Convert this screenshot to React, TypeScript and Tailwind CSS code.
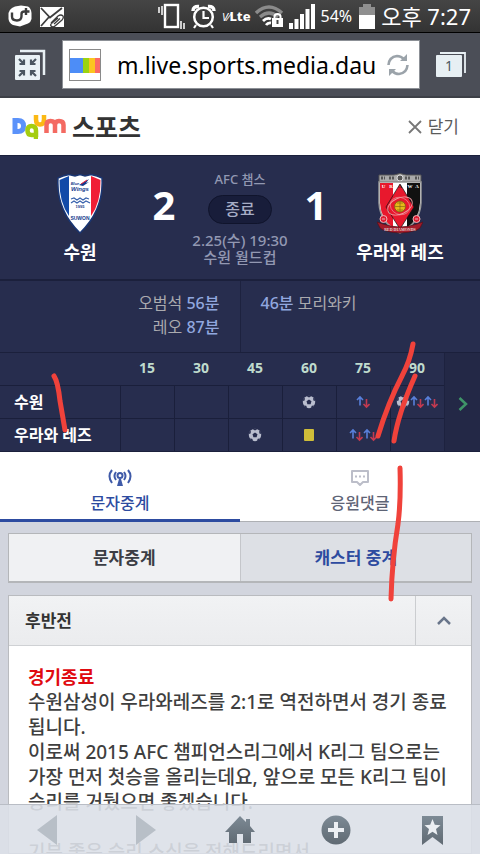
import type { ReactNode } from 'react'

const MINUTES = [15, 30, 45, 60, 75, 90]

type Mark = 'goal' | 'sub' | 'card'

const TIMELINE: { team: string; events: Mark[][] }[] = [
  { team: '수원', events: [[], [], [], ['goal'], ['sub'], ['goal', 'sub', 'sub']] },
  { team: '우라와 레즈', events: [[], [], ['goal'], ['card'], ['sub', 'sub'], []] },
]

function StatusBar() {
  return (
    <div className="flex h-[33px] shrink-0 items-center justify-between border-b border-black bg-linear-to-b from-[#454545] to-[#333333] pr-[9px] pl-2 text-white">
      <div className="flex items-center gap-2">
        <svg viewBox="0 0 24 22" className="h-[22px] w-6">
          <path d="M7 1.5L13 .5L20 1.5Q23 3 23.5 8V14Q23 17 20 18.5L12 21.5L5 20Q1 18 .5 14L.5 8Q1 5 4 3Z" fill="#fff" />
          <path d="M4 7.5V11.5Q4 15.500 9 15.500Q13.500 15.500 13.500 11V9Q13.500 6.500 16.500 6.500H21.500M18 3V10" fill="none" stroke="#3d3d3d" strokeWidth="2.4" />
        </svg>
        <svg viewBox="0 0 24 21" className="h-[21px] w-6">
          <path d="M0 1H24V21H0Z" fill="#fff" />
          <path d="M1 2L10 11.5L22 2M1 20L9 11" fill="none" stroke="#3d3d3d" strokeWidth="1.8" />
          <path d="M11 17L18 10Q21 8 23 10Q24 12 22 14L15 20Q13 22 11 20Q10 18.5 12 17L18 12M14 18L20 12.5" fill="none" stroke="#fff" strokeWidth="3.5" />
          <path d="M11 17L18 10Q21 8 23 10Q24 12 22 14L15 20Q13 22 11 20Q10 18.5 12 17L18 12M14 18L20 12.5" fill="none" stroke="#3d3d3d" strokeWidth="1.3" />
        </svg>
      </div>
      <div className="flex items-center">
        <svg viewBox="0 0 27 27" className="mr-[6px] h-[27px] w-[27px]" fill="none" stroke="#fff">
          <rect x="7" y="2" width="13" height="22" strokeWidth="2.4" />
          <path d="M1 4V10M4 3V12M23 18V26M26 20V26" strokeWidth="1.5" />
        </svg>
        <svg viewBox="0 0 25 25" className="mr-[6px] h-[25px] w-[25px]" fill="none" stroke="#fff">
          <circle cx="12.5" cy="13" r="9.3" strokeWidth="2.5" />
          <path d="M12.5 7V14H18M5 21L3 24M20 21L22 24" strokeWidth="2.2" />
          <path d="M2 7Q2 2 8 2.5M17 2.5Q23 2 23 7" strokeWidth="3.5" />
        </svg>
        <span className="mr-1 font-['Noto_Sans'] text-[13px] leading-4 font-extrabold">
          <span className="text-[11px] font-normal italic">V⁄</span>Lte
        </span>
        <svg viewBox="0 0 30 22" className="mr-1 h-[22px] w-[30px]" fill="none">
          <path d="M1 8Q14 -4 27 8" stroke="#8b8b8b" strokeWidth="3.5" />
          <path d="M5 12Q14 4 23 12" stroke="#8b8b8b" strokeWidth="3.2" />
          <path d="M8 16Q12 12 16 14M11 20Q13 17.5 16 18" stroke="#fff" strokeWidth="2.8" />
          <path d="M19.5 14V11.5Q19.5 9 22.5 9Q25.5 9 25.5 11.5V14" stroke="#fff" strokeWidth="2" />
          <rect x="17" y="13" width="11" height="9" fill="#fff" />
          <path d="M22.5 15V19" stroke="#444" strokeWidth="2" />
        </svg>
        <svg viewBox="0 0 26 25" className="mr-[6px] h-[25px] w-[26px]" fill="#fff">
          <path d="M0 19H4V25H0ZM5.5 15H9.5V25H5.5ZM11 10H15V25H11ZM16.5 5H20.5V25H16.5ZM22 0H26V25H22Z" />
        </svg>
        <span className="mr-[7px] font-['Noto_Sans'] text-base leading-5">54%</span>
        <svg viewBox="0 0 16 25" className="mr-[6px] h-[25px] w-4">
          <path d="M4 0H12V3H16V11H0V3H4Z" fill="#8f8f8f" />
          <path d="M0 11H16V25H0Z" fill="#fff" />
        </svg>
        <span className="text-[22px] leading-7 whitespace-nowrap">오후 7:27</span>
      </div>
    </div>
  )
}

function BrowserBar() {
  return (
    <div className="flex h-[65px] shrink-0 items-center border-b-2 border-[#3d4047] bg-[#4b4e57] px-3.5">
      <button aria-label="전체 화면" className="mr-4">
        <svg viewBox="0 0 32 32" className="h-8 w-8">
          <path d="M6 2H30V26" fill="none" stroke="#e8f0f4" strokeWidth="2.5" />
          <rect x="1" y="6" width="25" height="25" rx="1" fill="#eaf2f6" />
          <path d="M5 10L10 15M10 10.5V15H5.5M22 10L17 15M17 10.5V15H21.5M5 27L10 22M5.5 22H10V26.5M22 27L17 22M21.5 22H17V26.5" fill="none" stroke="#4b5661" strokeWidth="2.2" />
        </svg>
      </button>
      <div className="flex h-[49px] min-w-0 flex-1 items-center border border-[#8c9096] bg-white pr-2.5 pl-1.5">
        <svg viewBox="0 0 32 32" className="h-8 w-8 shrink-0">
          <rect x=".5" y=".5" width="31" height="31" fill="#fff" stroke="#8a8a8a" />
          <path d="M1 9H14V24H1Z" fill="#4d8df7" />
          <path d="M14 9H20V24H14Z" fill="#9bd311" />
          <path d="M20 9H26V24H20Z" fill="#fbc51f" />
          <path d="M26 9H31V24H26Z" fill="#fb6a64" />
        </svg>
        <input
          aria-label="주소"
          readOnly
          value="m.live.sports.media.dau"
          className="ml-4 min-w-0 flex-1 font-['Noto_Sans'] text-[23px] leading-8 text-black outline-none"
        />
        <button aria-label="새로 고침" className="shrink-0">
          <svg viewBox="0 0 22 24" className="h-6 w-[22px]" fill="none" stroke="#9ba3aa" strokeWidth="2.6">
            <path d="M1.5 12Q2 4 10 3Q14 3 17.5 6.5M20.5 12Q20 20 12 21Q8 21 4.5 17.5" />
            <path d="M20 1V8H13ZM2 23V16H9Z" fill="#9ba3aa" stroke="none" />
          </svg>
        </button>
      </div>
      <button aria-label="열린 탭" className="relative ml-4 h-[26px] w-[30px]">
        <svg viewBox="0 0 30 26" className="h-[26px] w-[30px]">
          <path d="M4 1H29V21" fill="none" stroke="#e8f0f4" strokeWidth="1.8" />
          <rect x="0" y="3" width="26" height="22" rx="1" fill="#e7eff3" />
        </svg>
        <span className="absolute inset-y-0 left-0 w-[26px] pt-0.5 font-['Noto_Sans'] text-sm leading-6 text-[#4b5661]">1</span>
      </button>
    </div>
  )
}

function DaumLogo() {
  return (
    <svg viewBox="0 0 54 24" className="h-6 w-[54px]" fill="none" strokeWidth="5">
      <path d="M3 5.5H6Q11.5 5.500 11.5 11Q11.5 16.500 6 16.500H3Z" stroke="#5b92fa" />
      <path d="M26 22H24V16Q24 11 19.5 11Q15.5 11 15.5 15.500Q15.5 20 19.5 20H24" stroke="#a5cd10" strokeWidth="4.5" />
      <path d="M24 0V4.500Q24 9.500 28 9.500Q32 9.500 32 4.500V0" stroke="#fbb915" strokeWidth="4.500" />
      <path d="M34.5 18V10Q34.5 6 38.5 6Q43 6 43 10V18M43 10Q43 6 47 6Q51.5 6 51.5 10V18" stroke="#f46a62" strokeWidth="4.5" />
    </svg>
  )
}

function SuwonCrest() {
  return (
    <svg viewBox="0 0 48 62" className="h-[62px] w-12">
      <path d="M2 5L7 3L13 1.5L19 3L24 1.5L29 3L35 1.5L41 3L46 5Q48 37 24 60Q0 37 2 5Z" fill="#fff" stroke="#193572" strokeWidth="1.5" />
      <path d="M3.500 7L13 3V43Q3 29 3.500 7Z" fill="#124aa8" />
      <path d="M35 3L44.500 7Q45 29 35 43Z" fill="#f01e35" />
      <path d="M23 12L33 6L30 10L33 9L27 13Z" fill="#153a8c" />
      <path d="M25 11L31 7" stroke="#f01e35" />
      <path d="M15 26L18 25L21 27L24 25L27 27L30 25L33 26M15 30L18 28L21 30L24 28L27 30L30 28L34 30" fill="none" stroke="#3862ad" strokeWidth="1.2" />
      <g fill="#153a8c" fontFamily="Liberation Sans" fontWeight="700" textAnchor="middle">
        <text x="19" y="12" fontSize="4" fontStyle="italic">Blue</text>
        <text x="24" y="17.500" fontSize="6" fontStyle="italic">Wings</text>
        <text x="24" y="35" fontSize="4">1995</text>
        <text x="24" y="46.500" fontSize="5">SUWON</text>
      </g>
    </svg>
  )
}

function UrawaCrest() {
  return (
    <svg viewBox="0 0 46 62" className="h-[62px] w-[46px]">
      <path d="M2 2H17L23 .5L29 2H44V9H2Z" fill="#aaa" stroke="#555" />
      <path d="M4 5H8M12 5H18M28 5H34M38 5H42" stroke="#555" strokeWidth="3" strokeDasharray="2 1" />
      <circle cx="23" cy="5" r="3" fill="#555" stroke="#ddd" />
      <path d="M2 9H44V30Q43 50 23 60Q3 50 2 30Z" fill="#fff" stroke="#999" strokeWidth="1.5" />
      <path d="M3 10H16V55Q4 46 3 30Z" fill="#e8182d" />
      <path d="M30 10H43V30Q42 46 30 55Z" fill="#111" />
      <path d="M23 11L37 34L23 56L9 34Z" fill="#e8182d" stroke="#111" strokeWidth=".7" />
      <ellipse cx="23" cy="33" rx="13" ry="8" fill="none" stroke="#ef9aa0" strokeWidth=".9" transform="rotate(-25 23 33)" />
      <ellipse cx="23" cy="33" rx="10" ry="8.5" fill="none" stroke="#ef9aa0" strokeWidth=".6" transform="rotate(25 23 33)" />
      <circle cx="23" cy="33.5" r="5.5" fill="#e5ba18" stroke="#7b5c13" strokeWidth=".8" />
      <path d="M18 33.5H28M20 30H26M20 37H26M23 28V39" stroke="#7b5c13" strokeWidth=".6" />
      <g fill="none" stroke="#efb5b9" strokeWidth="1">
        <circle cx="6.5" cy="46" r="3.5" fill="#df1d32" />
        <circle cx="39.5" cy="46" r="3.5" fill="#df1d32" />
        <path d="M5 46H8M38 46H41" />
      </g>
      <path d="M0 49L6 51Q23 57 40 51L46 49L43 55L40 57Q23 63 6 57L3 55Z" fill="#a51a29" stroke="#551018" strokeWidth=".7" />
      <text x="23" y="58" fontSize="4" fontFamily="Liberation Serif" fontWeight="700" textAnchor="middle" fill="#ead6d7">RED DIAMONDS</text>
      <g fontSize="5" fontFamily="Liberation Serif" fontWeight="700" textAnchor="middle">
        <text x="6.5" y="15" fill="#fff">U</text>
        <text x="14" y="15" fill="#fff">R</text>
        <text x="23" y="15" fill="#111">A</text>
        <text x="33" y="15" fill="#fff">W</text>
        <text x="40" y="15" fill="#fff">A</text>
      </g>
    </svg>
  )
}

function Team({ name, crest }: { name: string; crest: ReactNode }) {
  return (
    <div className="flex w-40 flex-col items-center pt-[17px]">
      {crest}
      <strong className="mt-[3px] text-lg leading-7 font-bold text-white">{name}</strong>
    </div>
  )
}

function Score({ value }: { value: number }) {
  return (
    <span className="w-6 pt-[26px] text-center font-['Noto_Sans'] text-[40px] leading-[46px] font-bold text-white">{value}</span>
  )
}

function Scoreboard() {
  return (
    <section className="flex h-[126px] shrink-0 justify-between border-t border-b-2 border-[#1b203c] bg-[#272d4e]">
      <Team name="수원" crest={<SuwonCrest />} />
      <div className="-mx-2 flex flex-1 justify-between">
        <Score value={2} />
        <div className="flex flex-col items-center pt-[13px] text-[15px] font-medium whitespace-nowrap text-[#9298b2]">
          <span className="text-[13px] leading-5">AFC 챔스</span>
          <span className="mt-1.5 mb-2 rounded-full border border-[#10142c] bg-[#181d3a] px-4 text-base leading-[27px] text-[#a7adc5]">종료</span>
          <span className="leading-[17px]">2.25(수) 19:30</span>
          <span className="leading-[17px]">수원 월드컵</span>
        </div>
        <Score value={1} />
      </div>
      <Team name="우라와 레즈" crest={<UrawaCrest />} />
    </section>
  )
}

function Scorers() {
  return (
    <section className="flex h-[71px] shrink-0 bg-[#272d4e] text-base leading-6 text-[#aaaaae]">
      <div className="flex-1 border-r border-[#1d223f] pt-2.5 pr-5 text-right">
        <p>오범석 <b className="font-medium text-[#91a7df]">56분</b></p>
        <p>레오 <b className="font-medium text-[#91a7df]">87분</b></p>
      </div>
      <div className="flex-1 pt-2.5 pl-5">
        <p><b className="font-medium text-[#91a7df]">46분</b> 모리와키</p>
      </div>
    </section>
  )
}

function EventMark({ mark }: { mark: Mark }) {
  if (mark === 'card') {
    return (
      <svg viewBox="0 0 10 12" className="h-3 w-2.5">
        <rect width="10" height="12" rx="1" fill="#cfbd39" />
      </svg>
    )
  }
  if (mark === 'goal') {
    return (
      <svg viewBox="0 0 14 14" className="h-3.5 w-3.5">
        <circle cx="7" cy="7" r="6.200" fill="#b9bdce" />
        <path d="M7 4.500L9.500 6.300L8.600 9.200H5.400L4.500 6.300ZM4.500 1L7 2.600L9.500 1L7 .5ZM.8 6L2.600 5.400L3 2.500L1 4.500ZM13.200 6L11.400 5.400L11 2.500L13 4.500ZM2 10.500L4.200 10.700L5.200 13L3 12.500ZM12 10.500L9.800 10.700L8.800 13L11 12.500Z" fill="#272d4e" />
      </svg>
    )
  }
  return (
    <svg viewBox="0 0 14 14" className="h-3.5 w-3.5" fill="none" strokeWidth="1.6">
      <path d="M4 10.500V2M1 5L4 2L7 5" stroke="#587fda" />
      <path d="M10.500 4V12M7.500 9L10.500 12L13.500 9" stroke="#c23a50" />
    </svg>
  )
}

function Timeline() {
  return (
    <section className="flex h-[100px] shrink-0 border-t border-b border-[#1b203c] bg-[#272d4e]">
      <div className="flex-1">
        <table className="h-full w-full table-fixed border-collapse">
          <thead>
            <tr className="h-8 font-['Noto_Sans'] text-sm text-[#bfdbcd]">
              <td className="w-[120px]" />
              {MINUTES.map((m) => (
                <th key={m} className="pb-0.5 font-bold">{m}</th>
              ))}
            </tr>
          </thead>
          <tbody>
            {TIMELINE.map(({ team, events }) => (
              <tr key={team} className="h-[33px] border-t border-[#1a1f3b]">
                <th className="pl-3.5 text-left text-base leading-6 font-bold whitespace-nowrap text-white">{team}</th>
                {events.map((marks, i) => (
                  <td key={MINUTES[i]} className="border-l border-[#1a1f3b]">
                    <div className="flex items-center justify-center">
                      {marks.map((mark, j) => (
                        <EventMark key={j} mark={mark} />
                      ))}
                    </div>
                  </td>
                ))}
              </tr>
            ))}
          </tbody>
        </table>
      </div>
      <button aria-label="다음" className="flex w-9 items-center justify-center border-l border-[#1d223f] bg-[#232846] pt-1">
        <svg viewBox="0 0 10 14" className="h-3.5 w-2.5" fill="none">
          <path d="M1.5 1L8 7L1.5 13" stroke="#3f9568" strokeWidth="2.5" />
        </svg>
      </button>
    </section>
  )
}

function Tabs() {
  return (
    <nav className="flex h-[70px] shrink-0 bg-white text-base leading-6 font-medium">
      <a href="#text" className="flex flex-1 flex-col items-center border-b-[3px] border-[#2d4ba0] pt-4 text-[#2d4ba0]">
        <svg viewBox="0 0 24 20" className="mb-[3px] h-5 w-6" fill="none" stroke="#3f5aa8" strokeWidth="2">
          <path d="M4 2Q-1 8 4 15M8 4Q5 8 8 12M20 2Q25 8 20 15M16 4Q19 8 16 12" />
          <circle cx="12" cy="7.5" r="2.5" />
          <path d="M11 11H13L15 18H9Z" fill="#3f5aa8" stroke="none" />
        </svg>
        문자중계
      </a>
      <a href="#comments" className="flex flex-1 flex-col items-center border-b border-[#aeb0b4] pt-4 text-[#5e6475]">
        <svg viewBox="0 0 20 20" className="mb-[3px] h-5 w-5" fill="none" stroke="#bcbec9" strokeWidth="2">
          <path d="M2 3H18V14H13L10 17L7 14H2Z" strokeLinejoin="round" />
          <path d="M5 8.5H7M9 8.5H11M13 8.5H15" />
        </svg>
        응원댓글
      </a>
    </nav>
  )
}

function BottomBar() {
  return (
    <nav className="fixed inset-x-0 bottom-0 flex h-[50px] items-center justify-around border-t border-[#b9bdc5] bg-[#dce0e8]/90">
      <svg width="0" height="0" className="absolute">
        <linearGradient id="steel" x2="0" y2="1">
          <stop stopColor="#7d8a95" />
          <stop offset="1" stopColor="#606a73" />
        </linearGradient>
      </svg>
      <button aria-label="뒤로">
        <svg viewBox="0 0 30 30" className="h-[30px] w-[30px]"><path d="M24 0V30L4 15Z" fill="#b8bfc7" /></svg>
      </button>
      <button aria-label="앞으로">
        <svg viewBox="0 0 30 30" className="h-[30px] w-[30px]"><path d="M7 0V30L27 15Z" fill="#b8bfc7" /></svg>
      </button>
      <button aria-label="홈">
        <svg viewBox="0 0 30 30" className="h-[30px] w-[30px]" fill="url(#steel)">
          <path d="M15 1L21 7V4H25V11L30 17H26V28H18V19H12V28H4V17H0Z" />
        </svg>
      </button>
      <button aria-label="추가">
        <svg viewBox="0 0 30 30" className="h-[30px] w-[30px]">
          <circle cx="15" cy="15" r="14.5" fill="url(#steel)" />
          <path d="M15 7V23M7 15H23" stroke="#eceff3" strokeWidth="4" />
        </svg>
      </button>
      <button aria-label="북마크">
        <svg viewBox="0 0 30 30" className="h-[30px] w-[30px]">
          <path d="M5 1H26V30L15.5 22L5 30Z" fill="url(#steel)" />
          <path d="M15.5 4L17.8 9.7L23.5 10.2L19 14L20.5 20L15.5 16.8L10.5 20L12 14L7.5 10.2L13.2 9.7Z" fill="#eceff3" />
        </svg>
      </button>
    </nav>
  )
}

function PenMarks() {
  return (
    <svg viewBox="0 0 480 854" className="pointer-events-none absolute top-0 left-0 h-[854px] w-[480px]" fill="none" stroke="#f0423b" strokeWidth="5" strokeLinecap="round">
      <path d="M54 376Q58 382 60 401L65 430" />
      <path d="M413 344Q410 361 402 376Q388 403 378 436" />
      <path d="M415 376Q398 414 394 441" />
      <path d="M400 468Q401 501 398 524Q392 560 391 599" />
    </svg>
  )
}

export default function App() {
  return (
    <div className="relative flex h-screen flex-col overflow-hidden bg-[#d2d5de] font-['Noto_Sans','Noto_Sans_CJK_KR',sans-serif]">
      <StatusBar />
      <BrowserBar />
      <header className="flex h-[57px] shrink-0 items-center justify-between bg-white pr-[21px] pl-3">
        <h1 className="flex items-center gap-1.5 text-[25px] leading-8 font-bold text-[#333333]">
          <DaumLogo />
          스포츠
        </h1>
        <button className="flex items-center gap-1.5 text-[17px] leading-6 text-[#5b5b5b]">
          <svg viewBox="0 0 14 14" className="h-3.5 w-3.5" stroke="#777" strokeWidth="1.8">
            <path d="M1 1L13 13M13 1L1 13" />
          </svg>
          닫기
        </button>
      </header>
      <Scoreboard />
      <Scorers />
      <Timeline />
      <Tabs />
      <main className="flex min-h-0 flex-1 flex-col gap-3 px-2 pt-[11px]">
        <div className="flex h-[50px] shrink-0 border border-b-2 border-[#b4b6b9] text-[17px] leading-6 font-bold">
          <button className="flex-1 bg-[#f0f1f3] text-[#3b3d44]">문자중계</button>
          <button className="flex-1 border-l border-[#c4c6ca] bg-[#dde0e5] text-[#2d4ba0]">캐스터 중계</button>
        </div>
        <section className="min-h-0 flex-1 overflow-hidden border border-[#b9bbbf] bg-white">
          <div className="flex h-[50px] border-b border-[#cfd1d4] bg-linear-to-b from-[#f1f2f4] to-[#ebecee]">
            <h2 className="flex-1 pl-4 text-[17px] leading-[50px] font-bold text-[#333333]">후반전</h2>
            <button aria-label="접기" className="flex w-14 items-center justify-center border-l border-[#cbcdd0]">
              <svg viewBox="0 0 14 9" className="h-[9px] w-3.5" fill="none">
                <path d="M1 8L7 2L13 8" stroke="#69758a" strokeWidth="2.5" />
              </svg>
            </button>
          </div>
          <div className="px-[19px] pt-[19px] text-[19px] leading-[25px] font-medium break-keep text-[#3f3f3f]">
            <p className="text-lg leading-[25px] font-bold text-[#e00a10]">경기종료</p>
            <p>수원삼성이 우라와레즈를 2:1로 역전하면서 경기 종료 됩니다.</p>
            <p>이로써 2015 AFC 챔피언스리그에서 K리그 팀으로는 가장 먼저 첫승을 올리는데요, 앞으로 모든 K리그 팀이 승리를 거뒀으면 좋겠습니다.</p>
            <p className="mt-[25px]">기분 좋은 승리 소식을 전해드리면서</p>
          </div>
        </section>
      </main>
      <BottomBar />
      <PenMarks />
    </div>
  )
}
